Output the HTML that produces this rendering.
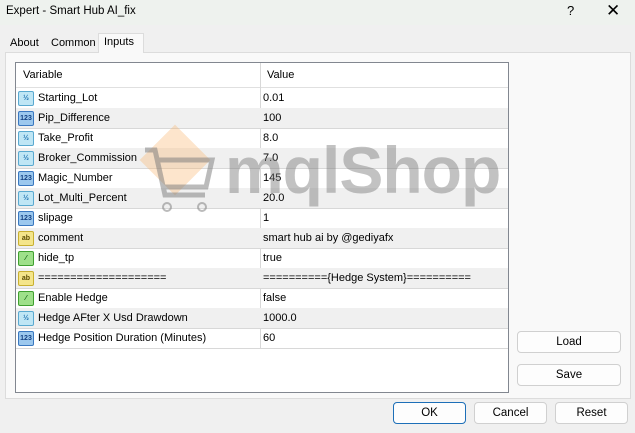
<!DOCTYPE html>
<html><head><style>
body{margin:0;width:635px;height:433px;background:#f0f0f0;font-family:"Liberation Sans",sans-serif;font-size:11px;color:#000;position:relative;overflow:hidden}
.t{position:absolute;left:0;top:0;width:635px;height:25px;background:#eef2ee}
.a{position:absolute}
.tab{position:absolute;top:35px;height:17px;line-height:17px;padding:0 5px;font-size:11px}
.panel{position:absolute;left:5px;top:52px;width:624px;height:345px;background:#f9f9f9;border:1px solid #dcdcdc}
.tbl{position:absolute;left:15px;top:62px;width:492px;height:329px;background:#fff;border:1px solid #828790}
.row{position:absolute;left:0;width:492px;height:20px;border-bottom:1px solid #d8d8d8;line-height:20px}
.g{background:#f0f0f0}
.c1{position:absolute;left:22px}
.c2{position:absolute;left:247px}
.dv{position:absolute;left:244px;top:0;width:1px;height:286px;background:#d8d8d8}
.ic{position:absolute;left:2px;top:3px;width:14px;height:13px;border-radius:2px;font-size:7px;line-height:13px;text-align:center;font-weight:bold}
.b{background:#bfe6f5;color:#1a70b0;border:1px solid #5aa9d0}
.n{background:#9cc8ee;color:#113e80;border:1px solid #3a78c0}
.s{background:#f4e58a;color:#5a4a00;border:1px solid #c8b030}
.k{background:#9ee08a;color:#106010;border:1px solid #40a030}
.btn{position:absolute;height:20px;background:#fdfdfd;border:1px solid #d0d0d0;border-radius:4px;text-align:center;line-height:20px;font-size:11.5px}
</style></head><body>
<div class="t"></div>
<div class="a" style="left:6px;top:5px;font-size:11.5px">Expert - Smart Hub AI_fix</div>
<div class="a" style="left:567px;top:3px;font-size:13px">?</div>
<div class="a" style="left:606px;top:1px;font-size:17px">✕</div>
<div class="tab" style="left:5px">About</div>
<div class="tab" style="left:46px">Common</div>
<div class="panel"></div>
<div class="tab" style="left:98px;top:33px;height:19px;width:34px;background:#f9f9f9;border:1px solid #dcdcdc;border-bottom:none">Inputs</div>
<div class="tbl">
<div class="row" style="top:0;height:24px;line-height:24px;border-bottom:1px solid #e0e0e0"><span class="a" style="left:7px">Variable</span><span class="a" style="left:251px">Value</span></div>
<div class="dv"></div>
<div class="row" style="top:25px"><span class="ic b">½</span><span class="c1">Starting_Lot</span><span class="c2">0.01</span></div>
<div class="row g" style="top:45px"><span class="ic n">123</span><span class="c1">Pip_Difference</span><span class="c2">100</span></div>
<div class="row" style="top:65px"><span class="ic b">½</span><span class="c1">Take_Profit</span><span class="c2">8.0</span></div>
<div class="row g" style="top:85px"><span class="ic b">½</span><span class="c1">Broker_Commission</span><span class="c2">7.0</span></div>
<div class="row" style="top:105px"><span class="ic n">123</span><span class="c1">Magic_Number</span><span class="c2">145</span></div>
<div class="row g" style="top:125px"><span class="ic b">½</span><span class="c1">Lot_Multi_Percent</span><span class="c2">20.0</span></div>
<div class="row" style="top:145px"><span class="ic n">123</span><span class="c1">slipage</span><span class="c2">1</span></div>
<div class="row g" style="top:165px"><span class="ic s">ab</span><span class="c1">comment</span><span class="c2">smart hub ai by @gediyafx</span></div>
<div class="row" style="top:185px"><span class="ic k">⁄</span><span class="c1">hide_tp</span><span class="c2">true</span></div>
<div class="row g" style="top:205px"><span class="ic s">ab</span><span class="c1">====================</span><span class="c2">=========={Hedge System}==========</span></div>
<div class="row" style="top:225px"><span class="ic k">⁄</span><span class="c1">Enable Hedge</span><span class="c2">false</span></div>
<div class="row g" style="top:245px"><span class="ic b">½</span><span class="c1">Hedge AFter X Usd Drawdown</span><span class="c2">1000.0</span></div>
<div class="row" style="top:265px"><span class="ic n">123</span><span class="c1">Hedge Position Duration (Minutes)</span><span class="c2">60</span></div>
</div>
<div class="a" style="left:150px;top:135px;width:50px;height:50px;background:rgba(250,180,110,.35);transform:rotate(-45deg)"></div>
<svg class="a" style="left:140px;top:145px" width="80" height="75"><path d="M5 5 L15 5 L25 50 L65 50 M18 15 L72 15 L66 42 L22 42" fill="none" stroke="rgba(120,120,120,.5)" stroke-width="5"/><circle cx="27" cy="62" r="4" fill="none" stroke="rgba(120,120,120,.5)" stroke-width="2"/><circle cx="62" cy="62" r="4" fill="none" stroke="rgba(120,120,120,.5)" stroke-width="2"/></svg>
<div class="a" style="left:225px;top:135px;font-size:66px;font-weight:bold;color:rgba(120,120,120,.45);line-height:70px;letter-spacing:-1px">mqlShop</div>
<div class="btn" style="left:517px;top:331px;width:102px">Load</div>
<div class="btn" style="left:517px;top:364px;width:102px">Save</div>
<div class="btn" style="left:393px;top:402px;width:71px;border-color:#1d6fb8">OK</div>
<div class="btn" style="left:474px;top:402px;width:71px">Cancel</div>
<div class="btn" style="left:555px;top:402px;width:71px">Reset</div>
</body></html>
